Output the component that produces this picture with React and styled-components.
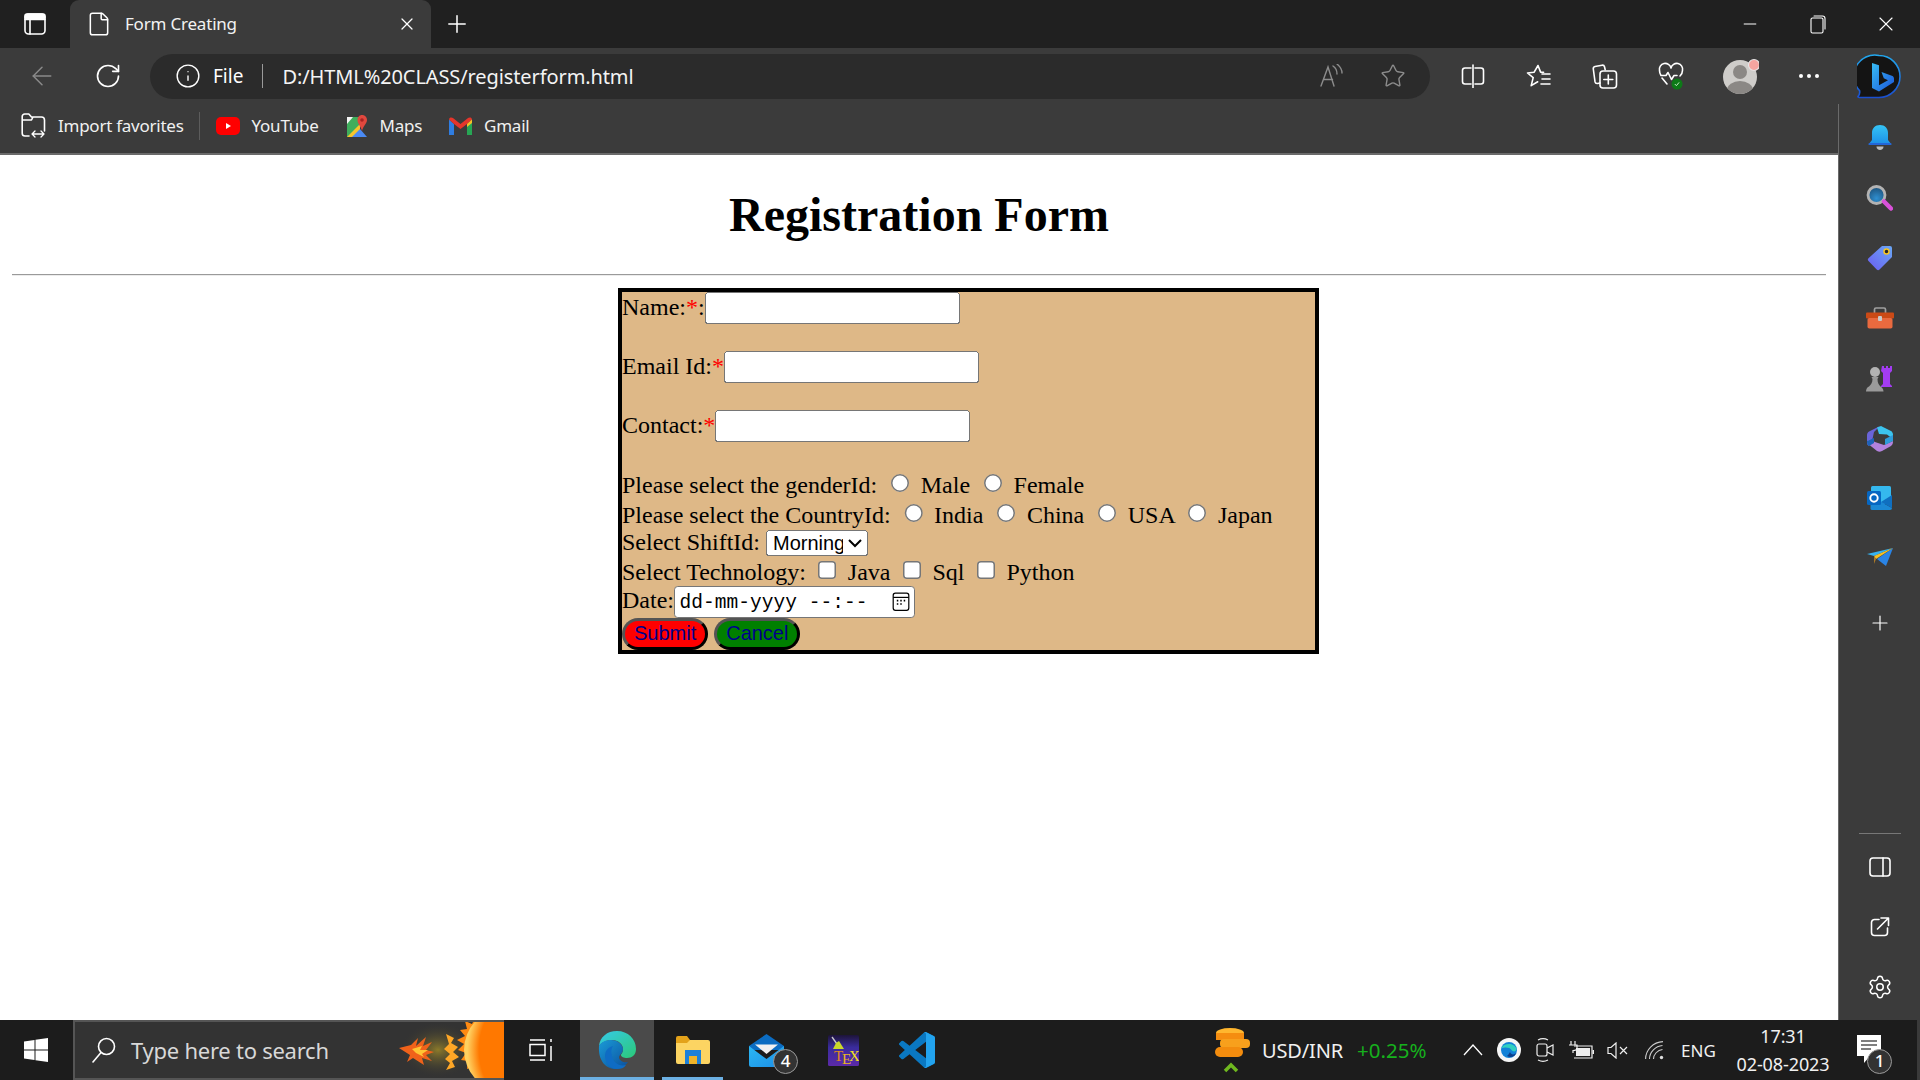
import styled, { createGlobalStyle } from "styled-components";
import { ArrowLeft, RotateCw, Info, Star, Plus, X, Minus, File, Settings } from "lucide-react";

const GlobalStyle = createGlobalStyle`
  html, body { margin: 0; padding: 0; height: 100%; overflow: hidden; background: #fff; }
  #root { height: 100%; }
`;

const UI_FONT = `"Noto Sans", "Open Sans", sans-serif`;

const Root = styled.div`
  height: 1080px;
  display: flex;
  flex-direction: column;
  font-family: ${UI_FONT};
  color: #fff;
`;

/* ---- window chrome ---- */
const TitleBar = styled.div`
  height: 48px;
  flex: none;
  display: flex;
  align-items: flex-end;
  background: #202020;
`;
const StripButton = styled.div`
  width: 70px;
  height: 48px;
  display: flex;
  align-items: center;
  justify-content: center;
`;
const Tab = styled.div`
  width: 361px;
  height: 48px;
  display: flex;
  align-items: center;
  padding: 0 14px 0 16px;
  box-sizing: border-box;
  background: #3b3b3b;
  border-radius: 9px 9px 0 0;
`;
const TabTitle = styled.span`
  flex: 1;
  margin-left: 13px;
  padding-bottom: 2px;
  font-size: 17px;
  letter-spacing: -0.2px;
  color: #f2f2f2;
`;
const NewTab = styled.div`
  width: 52px;
  height: 48px;
  display: flex;
  align-items: center;
  justify-content: center;
`;
const WindowControls = styled.div`
  margin-left: auto;
  display: flex;
`;
const WindowButton = styled.div`
  width: 68px;
  height: 48px;
  display: flex;
  align-items: center;
  justify-content: center;
`;

const Toolbar = styled.div`
  height: 56px;
  flex: none;
  display: flex;
  align-items: center;
  padding-left: 9px;
  background: #3b3b3b;
`;
const ToolSlot = styled.div`
  width: ${(p) => p.$w || 66}px;
  height: 56px;
  flex: none;
  display: flex;
  align-items: center;
  justify-content: center;
  position: relative;
`;
const AddressBar = styled.div`
  width: 1280px;
  height: 45px;
  flex: none;
  margin: 0 10px 0 9px;
  padding-left: 25px;
  box-sizing: border-box;
  display: flex;
  align-items: center;
  border-radius: 23px;
  background: #2b2b2b;
`;
const FileLabel = styled.span`
  margin-left: 12px;
  font-size: 19px;
`;
const AddressSep = styled.span`
  width: 1px;
  height: 24px;
  margin: 0 19px 0 19px;
  background: #9a9a9a;
`;
const Url = styled.span`
  font-size: 20px;
  letter-spacing: -0.1px;
  color: #f4f4f4;
`;
const AddressTools = styled.div`
  margin-left: auto;
  margin-right: 24px;
  display: flex;
  align-items: center;
  gap: 36px;
`;

const Middle = styled.div`
  flex: 1;
  min-height: 0;
  display: flex;
`;
const MainColumn = styled.div`
  flex: 1;
  min-width: 0;
  display: flex;
  flex-direction: column;
`;
const FavoritesBar = styled.div`
  height: 43px;
  flex: none;
  display: flex;
  align-items: center;
  padding: 0 0 6px 21px;
  background: #3b3b3b;
  border-bottom: 2px solid #6a6a6a;
`;
const Favorite = styled.div`
  display: flex;
  align-items: center;
  gap: ${(p) => p.$gap || 12}px;
  margin-right: ${(p) => p.$after || 27}px;
  font-size: 17px;
  letter-spacing: -0.25px;
  color: #f0f0f0;
`;
const FavSep = styled.span`
  width: 1px;
  height: 28px;
  margin: 0 16px 0 -12px;
  background: #5c5c5c;
`;

/* ---- the page itself, the original is shown at 150% browser zoom ---- */
const Page = styled.div`
  flex: 1;
  min-height: 0;
  overflow: hidden;
  background: #fff;
`;
const PageBody = styled.div`
  zoom: 1.5;
  padding: 0 8px;
  font-family: "Liberation Serif", "Times New Roman", serif;
  font-size: 16px;
  color: #000;
`;
const Heading = styled.h1`
  margin: 0.67em 0;
  font-size: 32px;
  font-weight: bold;
  text-align: center;
`;
const Rule = styled.hr`
  margin: 8px 0;
  border: 0;
  border-top: 1px solid #9a9a9a;
  border-bottom: 1px solid #ececec;
`;
const Form = styled.form`
  margin-left: 404px;
  width: 467.4px;
  box-sizing: border-box;
  border: 3px solid #000;
  background: burlywood;
`;
const Required = styled.span`
  color: red;
`;
const TextBox = styled.input`
  width: 170px;
  box-sizing: border-box;
  font-family: "Liberation Sans", Arial, sans-serif;
  font-size: 13.33px;
`;
const Choice = styled.input``;
const Shift = styled.select`
  width: 68px;
  font-family: "Liberation Sans", Arial, sans-serif;
  font-size: 13.33px;
`;
const DateField = styled.span`
  display: inline-flex;
  align-items: center;
  width: 161px;
  height: 21px;
  box-sizing: border-box;
  padding: 0 3px 0 3px;
  border: 0.67px solid #767676;
  border-radius: 2.5px;
  background: #fff;
`;
const DateText = styled.input`
  flex: 1;
  min-width: 0;
  padding: 1px 0 0;
  border: 0;
  outline: 0;
  background: transparent;
  font-family: "Liberation Mono", "DejaVu Sans Mono", monospace;
  font-size: 13px;
  letter-spacing: 0.03px;
  color: #000;
`;
const ActionButton = styled.button`
  margin-right: 4px;
  padding: 1px 6px;
  border: 2px outset #000;
  border-radius: 15px;
  background: ${(p) => p.$bg};
  color: darkblue;
  font-family: "Liberation Sans", Arial, sans-serif;
  font-size: 13.33px;
`;

/* ---- edge sidebar ---- */
const Sidebar = styled.aside`
  width: 82px;
  flex: none;
  display: flex;
  flex-direction: column;
  align-items: center;
  padding: 4px 0 3px;
  box-sizing: border-box;
  background: #3b3b3b;
  border-left: 1px solid #6a6a6a;
`;
const SideSlot = styled.div`
  height: 60px;
  margin-top: ${(p) => p.$mt || 0}px;
  flex: none;
  display: flex;
  align-items: center;
  justify-content: center;
`;
const SideGap = styled.div`
  flex: 1;
`;
const SideRule = styled.div`
  width: 42px;
  height: 1px;
  flex: none;
  background: #777;
  margin-bottom: 3px;
`;

/* ---- windows taskbar ---- */
const Taskbar = styled.div`
  height: 60px;
  flex: none;
  display: flex;
  align-items: stretch;
  background: #1c1c1c;
`;
const StartSlot = styled.div`
  width: 71px;
  padding-right: 2px;
  display: flex;
  align-items: center;
  justify-content: center;
`;
const SearchBox = styled.div`
  width: 431px;
  display: flex;
  align-items: center;
  padding-left: 17px;
  box-sizing: border-box;
  background: #333;
  border: 2px solid #555;
  border-right: 0;
  overflow: hidden;
`;
const SearchText = styled.span`
  margin-left: 15px;
  font-size: 22px;
  letter-spacing: -0.25px;
  color: #d8d8d8;
  white-space: nowrap;
`;
const SunArt = styled.svg`
  margin-left: auto;
  flex: none;
`;
const AppSlot = styled.div`
  width: ${(p) => p.$w}px;
  margin-left: ${(p) => p.$ml || 0}px;
  display: flex;
  align-items: center;
  justify-content: center;
  position: relative;
  box-sizing: border-box;
  background: ${(p) => (p.$active ? "#4a4a4a" : "transparent")};
  border-bottom: 3px solid ${(p) => (p.$open ? "#6cb0e3" : "transparent")};
  border-top: 3px solid transparent;
`;
const CountBadge = styled.span`
  position: absolute;
  width: 25px;
  height: 25px;
  box-sizing: border-box;
  border: 1.5px solid #9a9a9a;
  border-radius: 50%;
  background: #333;
  font-size: 17px;
  font-weight: 500;
  line-height: 21px;
  text-align: center;
  color: #fff;
  right: ${(p) => p.$right}px;
  bottom: ${(p) => p.$bottom}px;
`;
const Tray = styled.div`
  margin-left: auto;
  width: 706px;
  flex: none;
  display: flex;
  align-items: center;
  box-sizing: border-box;
  border-right: 3px solid #3a3a3a;
`;
const Ticker = styled.span`
  margin-left: 12px;
  font-size: 20px;
  letter-spacing: -0.15px;
  color: #f0f0f0;
`;
const TickerChange = styled.span`
  margin-left: 14px;
  width: 98px;
  font-size: 20.5px;
  letter-spacing: 0;
  color: #16b01c;
`;
const TraySlot = styled.div`
  width: ${(p) => p.$w || 36}px;
  flex: none;
  display: flex;
  align-items: center;
  justify-content: center;
`;
const Lang = styled.span`
  width: 46px;
  margin-left: 8px;
  font-size: 17px;
  color: #f0f0f0;
`;
const Clock = styled.div`
  width: 96px;
  margin-left: 8px;
  flex: none;
  display: flex;
  flex-direction: column;
  align-items: center;
  gap: 5px;
  font-size: 18px;
  letter-spacing: -0.1px;
  line-height: 23px;
  color: #f0f0f0;
`;
const NoticeSlot = styled.div`
  width: 78px;
  height: 60px;
  flex: none;
  display: flex;
  align-items: center;
  justify-content: center;
  position: relative;
`;

/* ---- drawn icons ---- */
const line = { fill: "none", stroke: "#fff", strokeWidth: 1.6, strokeLinecap: "round", strokeLinejoin: "round" };

const TabsIcon = () => (
  <svg width="22" height="22" viewBox="0 0 22 22" {...line}>
    <rect x="1" y="1" width="20" height="20" rx="3.5" />
    <path d="M1 6.5h20M6 6.5V21" />
    <rect x="1" y="1" width="20" height="5" rx="2" fill="#fff" />
  </svg>
);
const RestoreIcon = () => (
  <svg width="16" height="20" viewBox="0 0 16 20" {...line} strokeWidth="1.1">
    <rect x="1" y="4" width="12" height="15" rx="1.5" />
    <path d="M4 2h8.5A2.5 2.5 0 0 1 15 4.5V15" />
  </svg>
);
const ReadAloudIcon = () => (
  <svg width="24" height="24" viewBox="0 0 24 24" fill="none" stroke="#8c8c8c" strokeWidth="1.4" strokeLinecap="round">
    <path d="M1 22 8 3l6 19M3.5 15.5h9" />
    <path d="M13 2c3 2 4 5 4 8M17 0c3 2.500 5 5.500 5 9" />
  </svg>
);
const SplitIcon = () => (
  <svg width="24" height="24" viewBox="0 0 24 24" {...line}>
    <path d="M10 4H4a2.500 2.500 0 0 0-2.500 2.500v11A2.500 2.500 0 0 0 4 20h6M14 4h6a2.500 2.500 0 0 1 2.500 2.500v11A2.500 2.500 0 0 1 20 20h-6M12 1v23" />
  </svg>
);
const FavListIcon = () => (
  <svg width="26" height="26" viewBox="0 0 26 26" {...line}>
    <path d="M12 2.500l2.600 6.600 3 .2M1.500 10l5.700 4.600-2 8 6.500-3.800M16 11h8M16 16h8M15 21h9M1.500 10l6.500-.7L12 2.500" />
  </svg>
);
const CollectionsIcon = () => (
  <svg width="26" height="28" viewBox="0 0 26 28" {...line}>
    <path d="M8 21l-2.500.5c-1.300.2-2.200-.5-2.500-1.800L1.300 7c-.2-1.300.5-2.200 1.700-2.500l7-1.300c1.300-.2 2.200.4 2.500 1.600l.7 3" />
    <rect x="8" y="9" width="16.500" height="17" rx="3" />
    <path d="M16.300 13v9M11.800 17.500h9" />
  </svg>
);
const HealthIcon = () => (
  <svg width="28" height="28" viewBox="0 0 28 28">
    <path d="M10 22l-5-6M23 14c1.500-1.500 2.500-3 2.500-5.500A5.800 5.800 0 0 0 14 6 5.800 5.800 0 0 0 2.500 8.500c0 2 .5 3.500 1.500 5h5l2-3 3.500 7 2.500-4h3" {...line} />
    <circle cx="20" cy="22" r="5.500" fill="#0d7a17" />
    <path d="M17.800 22l1.600 1.700 2.700-3.300" fill="none" stroke="#bfe8c2" strokeWidth="1" />
  </svg>
);
const ProfileIcon = () => (
  <svg width="38" height="40" viewBox="0 0 38 40">
    <defs>
      <clipPath id="faceClip">
        <circle cx="19" cy="21" r="17" />
      </clipPath>
    </defs>
    <circle cx="19" cy="21" r="17" fill="#cfcdca" />
    <circle cx="19" cy="16" r="7" fill="#8b8885" />
    <ellipse cx="19" cy="34" rx="13" ry="9" fill="#8b8885" clipPath="url(#faceClip)" />
    <circle cx="33" cy="9" r="5.500" fill="#f4a5a0" stroke="#e5e5e5" strokeWidth="1.200" />
  </svg>
);
const DotsIcon = () => (
  <svg width="20" height="6" viewBox="0 0 20 6" fill="#fff">
    <circle cx="2" cy="3" r="2" />
    <circle cx="10" cy="3" r="2" />
    <circle cx="18" cy="3" r="2" />
  </svg>
);
const BingIcon = () => (
  <svg width="48" height="48" viewBox="0 0 48 48">
    <defs>
      <linearGradient id="bingB" x1="0" y1="0" x2="1" y2="1">
        <stop offset="0" stopColor="#37bdf5" />
        <stop offset="1" stopColor="#1b54d9" />
      </linearGradient>
      <linearGradient id="bingRing" x1="0" y1="0" x2="0" y2="1">
        <stop offset="0" stopColor="#22a8ee" />
        <stop offset="1" stopColor="#1a4fd0" />
      </linearGradient>
    </defs>
    <path d="M22 3.500a21 21 0 0 1 0 42H4c-2 0-3.200-.5-3-1 1.500-1.500 2.200-3 1.500-6A21 21 0 0 1 22 3.500z" fill="#141414" stroke="url(#bingRing)" strokeWidth="1.600" />
    <path d="M15 11l7 2.300v20l9-5-4.200-2-2.300-6.300 11 4c1 .5 1.500 1.500 1.500 3V30L22 39.500 15 36z" fill="url(#bingB)" />
  </svg>
);
const ImportIcon = () => (
  <svg width="25" height="25" viewBox="0 0 25 25" {...line}>
    <path d="M8 23H4a2.800 2.800 0 0 1-2.800-2.800V3.500A2.500 2.500 0 0 1 3.700 1h4.100l2.700 3h10a3 3 0 0 1 3 3v11M1.200 7h9.300L12 4" />
    <path d="M11 21h12M14 18l-3 3 3 3M20 18l3 3-3 3" strokeWidth="1.300" />
  </svg>
);
const YouTubeIcon = () => (
  <svg width="24" height="18" viewBox="0 0 24 18">
    <rect width="24" height="18" rx="5" fill="#f00" />
    <path d="M10 6l5 3-5 3z" fill="#fff" />
  </svg>
);
const MapsIcon = () => (
  <svg width="22" height="24" viewBox="0 0 22 24">
    <path d="M1 3h13v20H1z" fill="#3fae5c" />
    <path d="M1 3h6l-6 7z" fill="#f5f5f5" />
    <path d="M1 23l13-13v13z" fill="#f7c52b" />
    <path d="M6 23l8-8 7 8z" fill="#4a8af4" />
    <path d="M16 1c3 0 5 2.200 5 5 0 3.500-4 6-5 11-1-5-4.500-7-4.500-11 0-2.800 1.800-5 4.500-5z" fill="#e0483e" />
    <circle cx="16" cy="6" r="1.800" fill="#a22" />
  </svg>
);
const GmailIcon = () => (
  <svg width="23" height="18" viewBox="0 0 23 18">
    <path d="M0 2.500V18h5V7z" fill="#2f7de1" />
    <path d="M23 2.500V18h-5V7z" fill="#27a654" />
    <path d="M0 2.500C0 0 3 0 4 1l7.500 6L19 1c1-1 4-1 4 1.500L18 7l-6.500 5L5 7z" fill="#e5352b" />
    <path d="M18 7l5-4.500V6l-5 4z" fill="#f6bf26" />
  </svg>
);

const BellIcon = () => (
  <svg width="24" height="26" viewBox="0 0 24 26">
    <defs>
      <linearGradient id="bell" x1="0" y1="0" x2="0" y2="1">
        <stop offset="0" stopColor="#35c4f5" />
        <stop offset="1" stopColor="#1c8fe8" />
      </linearGradient>
    </defs>
    <path d="M12 0c5 0 8 3.500 8 8v7l3.500 4.500H.500L4 15V8c0-4.500 3-8 8-8z" fill="url(#bell)" />
    <rect x="0.500" y="18" width="23" height="2" rx="1" fill="#2466d8" />
    <path d="M8.500 21.500h7c0 2-1.500 3.500-3.500 3.500s-3.500-1.500-3.500-3.500z" fill="#bdbdbd" />
  </svg>
);
const SearchSideIcon = () => (
  <svg width="27" height="26" viewBox="0 0 27 26">
    <defs>
      <radialGradient id="lens" cx="0.5" cy="0.7" r="0.7">
        <stop offset="0" stopColor="#2f8fd0" />
        <stop offset="1" stopColor="#1c4f78" />
      </radialGradient>
    </defs>
    <circle cx="10.500" cy="10" r="8.500" fill="url(#lens)" stroke="#b3b3b3" strokeWidth="2.800" />
    <path d="M18 16.500l7 7" stroke="#d951d9" strokeWidth="4.500" strokeLinecap="round" />
  </svg>
);
const TagIcon = () => (
  <svg width="26" height="26" viewBox="0 0 26 26">
    <defs>
      <linearGradient id="tag" x1="0" y1="1" x2="1" y2="0">
        <stop offset="0" stopColor="#6a5cf2" />
        <stop offset="1" stopColor="#6aa8f5" />
      </linearGradient>
    </defs>
    <path d="M15 1h8a2 2 0 0 1 2 2v9L12.500 24.500a2 2 0 0 1-2.800 0L1.500 16a2 2 0 0 1 0-2.800z" fill="url(#tag)" />
    <circle cx="19.500" cy="6.500" r="2.500" fill="#23242a" stroke="#f6c421" strokeWidth="1.500" />
  </svg>
);
const ToolboxIcon = () => (
  <svg width="28" height="22" viewBox="0 0 28 22">
    <path d="M8.500 6V2.500A1.500 1.500 0 0 1 10 1h8a1.500 1.500 0 0 1 1.500 1.500V6" fill="none" stroke="#a0a0a0" strokeWidth="1.700" />
    <rect x="0" y="5.500" width="28" height="6" rx="1" fill="#cb4a16" />
    <rect x="1.500" y="11" width="25" height="10.500" rx="1.800" fill="#e96a3f" />
    <rect x="12" y="9" width="4" height="5" rx="1" fill="#c9c9c9" />
  </svg>
);
const ChessIcon = () => (
  <svg width="28" height="28" viewBox="0 0 28 28">
    <path d="M16 2h2v2h2V2h2v2h2V2h2v5l-2 2v11l2 2v1H15v-1l2-2V9l-2-2z" fill="#a33cf2" />
    <circle cx="9" cy="8" r="5" fill="#b3b3b3" />
    <path d="M5.500 13h7l-1 2c0 4 1.500 6 3 7.500 2 1 3 3.500 3 5H0c0-2 1-4.500 3-5C4.500 21 6.500 19 6.500 15z" fill="#9a9a9a" />
  </svg>
);
const OfficeIcon = () => (
  <svg width="26" height="27" viewBox="0 0 26 27">
    <path d="M13 1L2 6.500C.5 7.500 0 9 0 10v8c0 1.500 1 2.500 2 3l3-4.500L7 7z" fill="#6a64d8" />
    <path d="M10 2.500L14 1l10 5c1 .5 2 2 2 3.500V14l-6-4.500-8-.5z" fill="#3cc4ee" />
    <path d="M0 18c0-2 2-4 4-3l4 2 9 3 9-4c0 2 0 3-2 5l-9 5c-2 1-3 1-5 0z" fill="#b382dd" />
    <path d="M2 21l5-3v-5l-7 3c0 2 0 4 2 5z" fill="#1e63b8" />
    <path d="M26 10v6l-8 4v-6z" fill="#2f9bd9" />
  </svg>
);
const OutlookIcon = () => (
  <svg width="25" height="24" viewBox="0 0 25 24">
    <rect x="4" y="0" width="20" height="18" rx="1.500" fill="#35b8ee" />
    <path d="M3.500 10L25 22a2 2 0 0 1-2 2H5a2 2 0 0 1-1.500-1z" fill="#1b88d4" />
    <path d="M25 9v13l-11-6z" fill="#0f6fc0" />
    <rect x="0" y="5" width="14" height="14" rx="1.500" fill="#0667c2" />
    <circle cx="7" cy="12" r="3.700" fill="none" stroke="#fff" strokeWidth="1.900" />
  </svg>
);
const PlaneIcon = () => (
  <svg width="26" height="20" viewBox="0 0 26 20">
    <path d="M0 6L26 0 7 8z" fill="#36b3f0" />
    <path d="M26 0L19 18 10 11z" fill="#2a84e5" />
    <path d="M26 0L7 8l2 3z" fill="#f6c022" />
    <path d="M7 8l2 3-2 5z" fill="#a9792a" />
  </svg>
);
const PanelIcon = () => (
  <svg width="22" height="20" viewBox="0 0 22 20" {...line}>
    <rect x="1" y="1" width="20" height="18" rx="3" />
    <path d="M14 1v18" />
  </svg>
);
const OpenOutIcon = () => (
  <svg width="20" height="20" viewBox="0 0 20 20" {...line}>
    <path d="M9 2.500H4.500a3 3 0 0 0-3 3v10a3 3 0 0 0 3 3h10a3 3 0 0 0 3-3V11M11 1h7.500v7.500M18.500 1l-11 11" />
  </svg>
);

const WinLogo = () => (
  <svg width="24" height="24" viewBox="0 0 24 24" fill="#fff">
    <path d="M0 3.500L10.500 2v9.500H0zM11.500 1.800L24 0v11.500H11.500zM0 12.500h10.500V22L0 20.500zM11.500 12.500H24V24l-12.500-1.800z" />
  </svg>
);
const GlassIcon = () => (
  <svg width="24" height="26" viewBox="0 0 24 26" {...line}>
    <circle cx="14.500" cy="9.500" r="8" />
    <path d="M9 15.500L1 25" />
  </svg>
);
const SunImage = () => (
  <SunArt width="112" height="56" viewBox="0 0 112 56">
    <defs>
      <radialGradient id="glow" cx="0.5" cy="0.5" r="0.5">
        <stop offset="0" stopColor="#8c7a2a" />
        <stop offset="1" stopColor="#333" stopOpacity="0" />
      </radialGradient>
      <radialGradient id="disk" cx="1" cy="0.5" r="1">
        <stop offset="0" stopColor="#ff7800" />
        <stop offset="0.82" stopColor="#ff7800" />
        <stop offset="0.96" stopColor="#ffd060" />
      </radialGradient>
    </defs>
    <ellipse cx="46" cy="28" rx="38" ry="28" fill="url(#glow)" />
    <path d="M84 -6l-4 8-7-3 2 8-7 1 5 6-8 4 7 4-6 6 8 3-5 7 7 1-1 8 8-3 3 10h28V-6z" fill="#ff8a12" />
    <circle cx="114" cy="28" r="42" fill="url(#disk)" />
    <path d="M7 26l12-3 7-7-2 8 10-9-3 9 9-4-6 8 8 2-8 3 6 6-10-3 2 7-11-7-6 4 3-7-11-7z" fill="#f0621a" />
    <path d="M20 27l10-3-2 4 8 0-6 4 2 3-8-4z" fill="#ffc433" />
    <path d="M54 12l8 4-3 5 7 4-5 5 6 5-7 4 3 6-9 3 4-7-5-4 5-5-6-5 5-5z" fill="#ffa726" />
  </SunArt>
);
const TaskViewIcon = () => (
  <svg width="26" height="24" viewBox="0 0 26 24" fill="none" stroke="#fff" strokeWidth="1.500">
    <path d="M1 2h15M1 22h15M1 6.500h15v11H1z" />
    <path d="M22 1v3M22 8v15" />
  </svg>
);
const EdgeIcon = () => (
  <svg width="38" height="38" viewBox="0 0 38 38">
    <defs>
      <linearGradient id="edgeA" x1="0" y1="0" x2="1" y2="1">
        <stop offset="0" stopColor="#36c9e8" />
        <stop offset="1" stopColor="#2bc978" />
      </linearGradient>
      <linearGradient id="edgeB" x1="0" y1="0" x2="1" y2="1">
        <stop offset="0" stopColor="#1a9ad6" />
        <stop offset="1" stopColor="#0b4f9e" />
      </linearGradient>
    </defs>
    <path d="M19 0C30 0 38 8 38 18c0 6-4 9-9 9-3 0-6-1-6-3 0-1 2-2 2-6 0-5-5-9-11-9C8 9 3 12 1 15 2 6 9 0 19 0z" fill="url(#edgeA)" />
    <path d="M1 15c2-4 7-6 12-6 7 0 12 5 12 9 0 4-3 5-4 8 0 4 5 6 9 5-3 4-7 7-12 7C8 38 0 30 1 15z" fill="url(#edgeB)" />
    <path d="M19 38c-8 0-12-7-12-13s4-9 8-10c-2 3-2 6-1 10 1 6 7 11 14 9-2 3-5 4-9 4z" fill="#0f6cc4" />
  </svg>
);
const FolderIcon = () => (
  <svg width="34" height="28" viewBox="0 0 34 28">
    <path d="M0 2a2 2 0 0 1 2-2h9l3 4H0z" fill="#e3a21a" />
    <rect x="0" y="4" width="34" height="24" rx="2" fill="#fcd462" />
    <path d="M0 4h14l-3 3H0z" fill="#e3a21a" />
    <path d="M9 14h16v14h-4v-8h-8v8H9z" fill="#1d80d8" />
    <rect x="13" y="20" width="8" height="8" fill="#f0b429" />
  </svg>
);
const MailIcon = () => (
  <svg width="35" height="33" viewBox="0 0 35 33">
    <defs>
      <linearGradient id="mailBody" x1="0" y1="0" x2="1" y2="1">
        <stop offset="0" stopColor="#2bb7f3" />
        <stop offset="1" stopColor="#1d8fe6" />
      </linearGradient>
    </defs>
    <path d="M17.500 0L35 12v4H0v-4z" fill="#0b6cc2" />
    <path d="M6 10.500h23L17.500 20z" fill="#f1f1f1" />
    <path d="M0 12l17.500 13L35 12v18.500a2.500 2.500 0 0 1-2.500 2.500h-30A2.500 2.500 0 0 1 0 30.500z" fill="url(#mailBody)" />
  </svg>
);
const TexIcon = () => (
  <svg width="31" height="31" viewBox="0 0 31 31">
    <defs>
      <linearGradient id="tex" x1="0" y1="0" x2="0" y2="1">
        <stop offset="0" stopColor="#1d1438" />
        <stop offset="0.4" stopColor="#3a2c9e" />
        <stop offset="1" stopColor="#5c2aa8" />
      </linearGradient>
    </defs>
    <rect width="31" height="31" rx="1.500" fill="url(#tex)" />
    <path d="M4 2l5 7" stroke="#c9c9c9" strokeWidth="1.300" />
    <path d="M8 8l3-2 5 8H5z" fill="#c9d82a" />
    <g fontFamily="Liberation Serif, serif" fontSize="15">
      <text x="6" y="26" fill="#e08a20">T</text>
      <text x="14" y="29" fill="#e8b820">E</text>
      <text x="21" y="26" fill="#f2e020">X</text>
    </g>
  </svg>
);
const VsCodeIcon = () => (
  <svg width="36" height="36" viewBox="0 0 24 24">
    <path d="M23.150 2.587L18.210.21a1.494 1.494 0 0 0-1.705.29l-9.460 8.630-4.120-3.128a.999.999 0 0 0-1.276.057L.327 7.261A1 1 0 0 0 .326 8.740L3.899 12 .326 15.260a1 1 0 0 0 .001 1.479L1.650 17.940a.999.999 0 0 0 1.276.057l4.120-3.128 9.460 8.630a1.492 1.492 0 0 0 1.704.290l4.942-2.377A1.500 1.500 0 0 0 24 20.060V3.939a1.500 1.500 0 0 0-.850-1.352zm-5.146 14.861L10.826 12l7.178-5.448v10.896z" fill="#0a78c2" />
    <path d="M16.500.500a1.494 1.494 0 0 1 1.710-.290l4.940 2.377A1.500 1.500 0 0 1 24 3.939V20.060a1.500 1.500 0 0 1-.850 1.353l-4.942 2.377a1.492 1.492 0 0 1-1.704-.290 1 1 0 0 0 1.500-.700V1.200a1 1 0 0 0-1.500-.700z" fill="#22a3ee" />
  </svg>
);
const CoinsIcon = () => (
  <svg width="36" height="46" viewBox="0 0 36 46">
    <ellipse cx="16" cy="6" rx="14" ry="5" fill="#ffb62e" />
    <rect x="2" y="6" width="28" height="7" fill="#f58d10" />
    <rect x="6" y="12" width="30" height="9" rx="4" fill="#f8a01c" />
    <rect x="1" y="20" width="28" height="10" rx="5" fill="#f38c0e" />
    <path d="M11 44l6-6 6 6" fill="none" stroke="#6fb81f" strokeWidth="3.500" />
  </svg>
);
const ChevronUpIcon = () => (
  <svg width="20" height="12" viewBox="0 0 20 12" fill="none" stroke="#fff" strokeWidth="1.300">
    <path d="M1 11l9-10 9 10" />
  </svg>
);
const EdgeTrayIcon = () => (
  <svg width="24" height="24" viewBox="0 0 24 24">
    <circle cx="12" cy="12" r="12" fill="#f6f6f6" />
    <circle cx="12" cy="12" r="8" fill="#1382d8" />
    <path d="M4.500 10c2-5 13-6 15 1 0 3-4 3-5 1-1-3-7-3-10-2z" fill="#32d0c0" />
    <path d="M13 14c1 3 4 3 6.500 1-2 4-6 5-9.500 3 1-1 2-2 3-4z" fill="#0d3f8c" />
  </svg>
);
const CameraIcon = () => (
  <svg width="18" height="24" viewBox="0 0 18 24" fill="none" stroke="#eee" strokeWidth="1.200">
    <rect x="1" y="6" width="10" height="12" rx="2" />
    <path d="M11 10l6-3v10l-6-3" />
    <path d="M2 2c3-1.600 7-1.600 10 0M2 22c3 1.600 7 1.600 10 0" />
  </svg>
);
const BatteryIcon = () => (
  <svg width="25" height="18" viewBox="0 0 25 18">
    <path d="M2 0v4M6 0v4M0 4h8v3c0 1.500-2 2.500-4 2.500V12" fill="none" stroke="#eee" strokeWidth="1.200" />
    <path d="M5 5h18v12H5" fill="none" stroke="#eee" strokeWidth="1.200" />
    <rect x="7" y="7" width="14" height="8" fill="#eee" />
    <rect x="23.500" y="9" width="1.500" height="4" fill="#eee" />
  </svg>
);
const MuteIcon = () => (
  <svg width="21" height="17" viewBox="0 0 21 17" fill="none" stroke="#eee" strokeWidth="1.200">
    <path d="M1 5.500h3L9 1v15l-5-4.500H1z" />
    <path d="M13 5l7 7M20 5l-7 7" />
  </svg>
);
const WifiIcon = () => (
  <svg width="19" height="19" viewBox="0 0 19 19" fill="none" stroke="#ccc" strokeWidth="1.100">
    <path d="M.6 18C.6 9 8 1 18 .6M4.500 18c0-7 6-13 13-13.500M8.500 18c0-4.500 4-9 9-9.500" />
    <circle cx="16.500" cy="16.500" r="1.700" fill="#ddd" stroke="none" />
  </svg>
);
const NoticeIcon = () => (
  <svg width="26" height="30" viewBox="0 0 26 30">
    <path d="M0 0h24v21H13l-6 7v-7H0z" fill="#fff" />
    <path d="M4 6h16M4 10h16M4 14h10" stroke="#555" strokeWidth="1.300" />
  </svg>
);
const CalendarIcon = () => (
  <svg width="12" height="13" viewBox="0 0 12 13" fill="none" stroke="#000" strokeWidth="0.800">
    <rect x="0.800" y="0.800" width="10.400" height="11.400" rx="1.500" />
    <path d="M0.800 3.600h10.400" />
    <path d="M3.200 5.700h1M5.500 5.700h1M7.800 5.700h1M3.200 8h1M5.500 8h1" strokeWidth="1.100" />
  </svg>
);

const sideApps = [BellIcon, SearchSideIcon, TagIcon, ToolboxIcon, ChessIcon, OfficeIcon, OutlookIcon, PlaneIcon];

export default function App() {
  return (
    <Root>
      <GlobalStyle />
      <TitleBar>
        <StripButton><TabsIcon /></StripButton>
        <Tab>
          <File size={26} strokeWidth={1.4} color="#fff" />
          <TabTitle>Form Creating</TabTitle>
          <X size={20} strokeWidth={1.5} color="#fff" />
        </Tab>
        <NewTab><Plus size={28} strokeWidth={1.3} color="#fff" /></NewTab>
        <WindowControls>
          <WindowButton><Minus size={20} strokeWidth={1.2} color="#fff" /></WindowButton>
          <WindowButton><RestoreIcon /></WindowButton>
          <WindowButton><X size={24} strokeWidth={1.1} color="#fff" /></WindowButton>
        </WindowControls>
      </TitleBar>

      <Toolbar>
        <ToolSlot><ArrowLeft size={30} strokeWidth={1.2} color="#8a8a8a" /></ToolSlot>
        <ToolSlot><RotateCw size={28} strokeWidth={1.4} color="#fff" /></ToolSlot>
        <AddressBar>
          <Info size={26} strokeWidth={1.3} color="#fff" />
          <FileLabel>File</FileLabel>
          <AddressSep />
          <Url>D:/HTML%20CLASS/registerform.html</Url>
          <AddressTools>
            <ReadAloudIcon />
            <Star size={26} strokeWidth={1.3} color="#8c8c8c" />
          </AddressTools>
        </AddressBar>
        <ToolSlot><SplitIcon /></ToolSlot>
        <ToolSlot><FavListIcon /></ToolSlot>
        <ToolSlot><CollectionsIcon /></ToolSlot>
        <ToolSlot><HealthIcon /></ToolSlot>
        <ToolSlot $w={72}><ProfileIcon /></ToolSlot>
        <ToolSlot><DotsIcon /></ToolSlot>
        <ToolSlot $w={78}><BingIcon /></ToolSlot>
      </Toolbar>

      <Middle>
        <MainColumn>
          <FavoritesBar>
            <Favorite $after={27}><ImportIcon />Import favorites</Favorite>
            <FavSep />
            <Favorite><YouTubeIcon />YouTube</Favorite>
            <Favorite><MapsIcon />Maps</Favorite>
            <Favorite><GmailIcon />Gmail</Favorite>
          </FavoritesBar>
          <Page>
            <PageBody>
              <Heading>Registration Form</Heading>
              <Rule />
              <Form>
                Name:<Required>*</Required>:<TextBox type="text" /><br /><br />
                Email Id:<Required>*</Required><TextBox type="text" /><br /><br />
                Contact:<Required>*</Required><TextBox type="text" /><br /><br />
                Please select the genderId: <Choice type="radio" name="gender" /> Male <Choice type="radio" name="gender" /> Female<br />
                Please select the CountryId: <Choice type="radio" name="country" /> India <Choice type="radio" name="country" /> China <Choice type="radio" name="country" /> USA <Choice type="radio" name="country" /> Japan<br />
                Select ShiftId: <Shift defaultValue="Morning"><option>Morning</option><option>Evening</option></Shift><br />
                Select Technology: <Choice type="checkbox" /> Java <Choice type="checkbox" /> Sql <Choice type="checkbox" /> Python<br />
                Date:<DateField><DateText type="text" readOnly value="dd-mm-yyyy --:--" /><CalendarIcon /></DateField><br />
                <ActionButton type="button" $bg="red">Submit</ActionButton>
                <ActionButton type="button" $bg="green">Cancel</ActionButton>
              </Form>
            </PageBody>
          </Page>
        </MainColumn>
        <Sidebar>
          {sideApps.map((Icon, i) => (
            <SideSlot key={i}><Icon /></SideSlot>
          ))}
          <SideSlot $mt={5}><Plus size={24} strokeWidth={1.2} color="#fff" /></SideSlot>
          <SideGap />
          <SideRule />
          <SideSlot><PanelIcon /></SideSlot>
          <SideSlot><OpenOutIcon /></SideSlot>
          <SideSlot><Settings size={26} strokeWidth={1.4} color="#fff" /></SideSlot>
        </Sidebar>
      </Middle>

      <Taskbar>
        <StartSlot><WinLogo /></StartSlot>
        <SearchBox>
          <GlassIcon />
          <SearchText>Type here to search</SearchText>
          <SunImage />
        </SearchBox>
        <AppSlot $w={76}><TaskViewIcon /></AppSlot>
        <AppSlot $w={74} $active $open><EdgeIcon /></AppSlot>
        <AppSlot $w={61} $ml={8} $open><FolderIcon /></AppSlot>
        <AppSlot $w={86}><MailIcon /><CountBadge $right={11} $bottom={3}>4</CountBadge></AppSlot>
        <AppSlot $w={68}><TexIcon /></AppSlot>
        <AppSlot $w={80}><VsCodeIcon /></AppSlot>
        <Tray>
          <TraySlot><CoinsIcon /></TraySlot>
          <Ticker>USD/INR</Ticker>
          <TickerChange>+0.25%</TickerChange>
          <TraySlot><ChevronUpIcon /></TraySlot>
          <TraySlot><EdgeTrayIcon /></TraySlot>
          <TraySlot><CameraIcon /></TraySlot>
          <TraySlot><BatteryIcon /></TraySlot>
          <TraySlot><MuteIcon /></TraySlot>
          <TraySlot $w={38}><WifiIcon /></TraySlot>
          <Lang>ENG</Lang>
          <Clock><span>17:31</span><span>02-08-2023</span></Clock>
          <NoticeSlot><NoticeIcon /><CountBadge $right={17} $bottom={6}>1</CountBadge></NoticeSlot>
        </Tray>
      </Taskbar>
    </Root>
  );
}
